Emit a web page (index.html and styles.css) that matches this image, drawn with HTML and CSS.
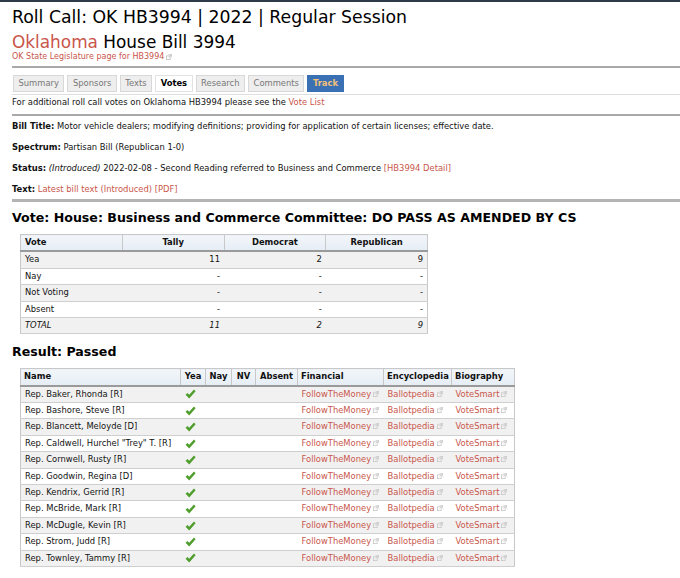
FILE: index.html
```html
<!DOCTYPE html>
<html>
<head>
<meta charset="utf-8">
<link rel="stylesheet" href="styles.css">
</head>
<body>
<div class="topbar"></div>
<div class="page">
  <h1 class="title">Roll Call: OK HB3994 | 2022 | Regular Session</h1>
  <h2 class="subtitle"><a class="state">Oklahoma</a> House Bill 3994</h2>
  <div class="statelink"><a>OK State Legislature page for HB3994</a><svg class="ext" viewBox="0 0 8 8"><rect x="0.5" y="2.5" width="5" height="5" fill="none" stroke="#bbb"/><path d="M3.5 0.5h4v4M7.5 0.5L3.5 4.5" fill="none" stroke="#bbb"/></svg></div>
  <div class="rule first"></div>
  <div class="tabs">
    <span class="tab">Summary</span>
    <span class="tab">Sponsors</span>
    <span class="tab">Texts</span>
    <span class="tab active">Votes</span>
    <span class="tab">Research</span>
    <span class="tab">Comments</span>
    <span class="tab track">Track</span>
  </div>
  <div class="thinrule"></div>
  <p class="note">For additional roll call votes on Oklahoma HB3994 please see the <a>Vote List</a></p>
  <div class="rule"></div>
  <div class="info">
    <p><b>Bill Title:</b> Motor vehicle dealers; modifying definitions; providing for application of certain licenses; effective date.</p>
    <p><b>Spectrum:</b> Partisan Bill (Republican 1-0)</p>
    <p><b>Status:</b> <i>(Introduced)</i> 2022-02-08 - Second Reading referred to Business and Commerce <a>[HB3994 Detail]</a></p>
    <p><b>Text:</b> <a>Latest bill text (Introduced) [PDF]</a></p>
  </div>
  <div class="rule thick"></div>
  <h3 class="heading">Vote: House: Business and Commerce Committee: DO PASS AS AMENDED BY CS</h3>
  <table class="grid tally">
    <thead>
      <tr><th class="left">Vote</th><th>Tally</th><th>Democrat</th><th>Republican</th></tr>
    </thead>
    <tbody>
      <tr><td>Yea</td><td class="num">11</td><td class="num">2</td><td class="num">9</td></tr>
      <tr><td>Nay</td><td class="num">-</td><td class="num">-</td><td class="num">-</td></tr>
      <tr><td>Not Voting</td><td class="num">-</td><td class="num">-</td><td class="num">-</td></tr>
      <tr><td>Absent</td><td class="num">-</td><td class="num">-</td><td class="num">-</td></tr>
      <tr class="total"><td>TOTAL</td><td class="num">11</td><td class="num">2</td><td class="num">9</td></tr>
    </tbody>
  </table>
  <h3 class="heading result">Result: Passed</h3>
  <table class="grid members">
    <colgroup>
      <col class="c-name"><col class="c-yea"><col class="c-nay"><col class="c-nv"><col class="c-abs"><col class="c-fin"><col class="c-enc"><col class="c-bio">
    </colgroup>
    <thead>
      <tr><th class="left">Name</th><th>Yea</th><th>Nay</th><th>NV</th><th>Absent</th><th class="left">Financial</th><th class="left">Encyclopedia</th><th class="left">Biography</th></tr>
    </thead>
    <tbody id="rows"></tbody>
  </table>
</div>
<script src="app.js"></script>
</body>
</html>
```
FILE: app.js
```js
const names = [
  'Rep. Baker, Rhonda [R]',
  'Rep. Bashore, Steve [R]',
  'Rep. Blancett, Meloyde [D]',
  'Rep. Caldwell, Hurchel "Trey" T. [R]',
  'Rep. Cornwell, Rusty [R]',
  'Rep. Goodwin, Regina [D]',
  'Rep. Kendrix, Gerrid [R]',
  'Rep. McBride, Mark [R]',
  'Rep. McDugle, Kevin [R]',
  'Rep. Strom, Judd [R]',
  'Rep. Townley, Tammy [R]'
];
const ext = '<svg class="ext" viewBox="0 0 8 8"><rect x="0.5" y="2.5" width="5" height="5" fill="none" stroke="#c4c4c4"/><path d="M3.5 0.5h4v4M7.5 0.5L3.5 4.5" fill="none" stroke="#c4c4c4"/></svg>';
const check = '<svg class="check" viewBox="0 0 12 11"><path d="M0.6 6.4L2.7 4.3L4.6 6.3L9.8 0.6L11.6 2.4L4.6 10.4Z" fill="#4f9d2d"/></svg>';
const tbody = document.getElementById('rows');
tbody.innerHTML = names.map(n =>
  `<tr><td>${n.replace(/"/g,'&quot;')}</td><td class="ctr">${check}</td><td></td><td></td><td></td>` +
  `<td><a>FollowTheMoney</a>${ext}</td><td><a>Ballotpedia</a>${ext}</td><td><a>VoteSmart</a>${ext}</td></tr>`
).join('');
```
FILE: styles.css
```css
html, body {
  margin: 0;
  padding: 0;
  background: #fff;
}
body {
  font-family: "DejaVu Sans", Verdana, sans-serif;
  font-size: 8.4px;
  color: #111;
}
.topbar {
  height: 2px;
  background: #2d3a4a;
}
.page {
  padding-left: 12px;
}
a {
  color: #c9564b;
  text-decoration: none;
}
.title {
  font-size: 17.3px;
  font-weight: normal;
  margin: 4px 0 0 0;
  line-height: 22px;
  color: #000;
}
.subtitle {
  font-size: 16.9px;
  font-weight: normal;
  margin: 4px 0 0 0;
  line-height: 20px;
  color: #000;
}
.statelink {
  font-size: 8px;
  line-height: 10px;
  display: flex;
  align-items: center;
  gap: 1px;
}
.ext {
  width: 6px;
  height: 6px;
  margin-left: 1px;
  vertical-align: 0;
}
.rule {
  height: 0;
  border-top: 2px solid #a9a9a9;
  margin-top: 6px;
}
.rule.first {
  margin-top: 4px;
}
.tabs {
  display: flex;
  gap: 3px;
  margin-top: 7px;
  padding-left: 1px;
}
.tab {
  display: block;
  height: 15px;
  line-height: 15px;
  padding: 0 4.5px;
  border: 1px solid #d8d8d8;
  background: #eeeeee;
  color: #777;
}
.tab.active {
  background: #fff;
  color: #000;
  font-weight: bold;
  border-color: #e2e2e2;
}
.tab.track {
  background: #3a71b4;
  border-color: #3a71b4;
  color: #f3c07a;
  font-weight: bold;
}
.thinrule {
  border-top: 1px solid #dedede;
  margin-top: 2px;
}
.note {
  margin: 1px 0 0 0;
  line-height: 12px;
}
.info p {
  margin: 4px 0 9px 0;
  line-height: 12px;
}
.info p:last-child {
  margin-bottom: 0;
}
.rule.thick {
  border-top: 3px solid #b4b4b4;
  margin-top: 4px;
}
.heading {
  font-size: 12.6px;
  font-weight: bold;
  line-height: 18px;
  margin: 7px 0 0 0;
  color: #000;
}
.heading.result {
  margin-top: 9px;
}
.grid {
  border-collapse: collapse;
  margin: 7px 0 0 8px;
  border: 1px solid #c8c8c8;
}
.grid th {
  background: linear-gradient(#f2f6fa, #e6edf5);
  font-weight: bold;
  text-align: center;
  border-left: 1px solid #c8c8c8;
  border-bottom: 2px solid #9a9a9a;
  padding: 2px 4px;
  line-height: 11.3px;
}
.grid th.left {
  text-align: left;
}
.grid td {
  padding: 2px 4px;
  line-height: 11.4px;
  border-bottom: 1px solid #cfcfcf;
  white-space: nowrap;
}
.grid tbody tr:nth-child(odd) td {
  background: #f1f1f1;
}
.tally {
  width: 408px;
  table-layout: fixed;
}
.tally td.num {
  text-align: right;
}
.tally tr.total td {
  font-style: italic;
}
.members {
  table-layout: fixed;
  width: 494px;
}
.members th {
  padding: 2px 3px;
}
.c-name { width: 160px; }
.c-yea { width: 25px; }
.c-nay { width: 26px; }
.c-nv { width: 24px; }
.c-abs { width: 42px; }
.c-fin { width: 86px; }
.c-enc { width: 68px; }
.c-bio { width: 63px; }
.members td.ctr {
  padding-left: 4px;
}
.check {
  width: 11px;
  height: 10px;
  display: block;
}
.members td a + .ext {
  margin-left: 2px;
}
```
